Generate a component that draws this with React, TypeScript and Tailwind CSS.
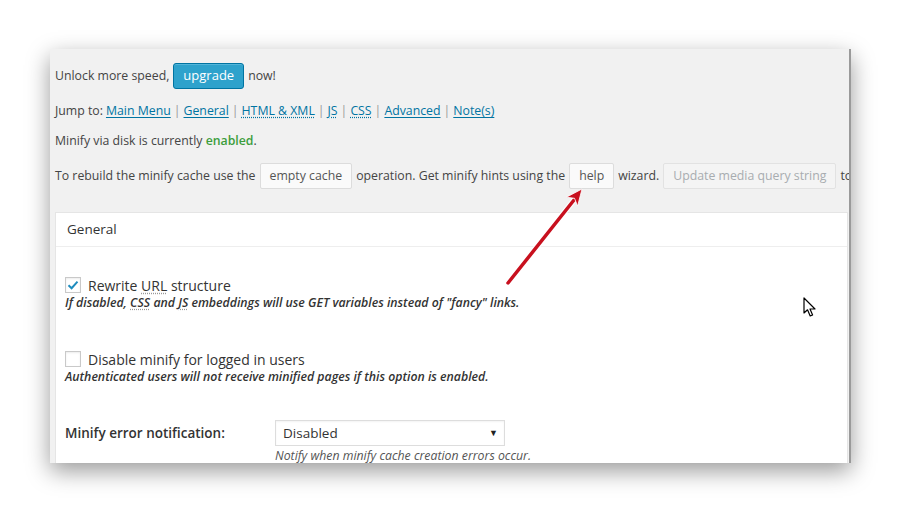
import { useState } from "react";

const font = { fontFamily: '"Open Sans", "Liberation Sans", sans-serif' };

const jumpLinks = [
  { label: "Main Menu" },
  { label: "General" },
  { label: "HTML & XML", abbr: true },
  { label: "JS", abbr: true },
  { label: "CSS", abbr: true },
  { label: "Advanced" },
  { label: "Note(s)" },
];

const WpButton = ({ children, disabled = false }) => (
  <span
    className={
      "inline-flex items-center h-[26px] px-[9px] mx-[4px] border rounded-[2px] text-[12.3px] " +
      (disabled ? "border-[#e2e2e2] bg-[#f4f4f4] text-[#a8acb0]" : "border-[#dcdcdc] bg-[#fafafa] text-[#555]")
    }
  >
    {children}
  </span>
);

const Checkbox = ({ checked }) => (
  <span className="w-[16px] h-[16px] shrink-0 border border-[#c9c9c9] bg-white shadow-[inset_0_1px_2px_rgba(0,0,0,0.08)] flex items-center justify-center">
    {checked && (
      <svg width="12" height="12" viewBox="0 0 12 12">
        <path d="M1.5 6.2 L4.6 9.2 L10.5 2.6" fill="none" stroke="#1e8cbe" strokeWidth="2" />
      </svg>
    )}
  </span>
);

const App = () => {
  const [rewrite, setRewrite] = useState(true);

  return (
    <div className="w-[900px] h-[513px] bg-white relative overflow-hidden text-[#444]" style={font}>
      <div className="ml-[50px] mt-[49px] w-[801px] h-[414px] bg-[#f1f1f1] overflow-hidden border-r-2 border-[#9a9a9a] shadow-[0_8px_22px_rgba(0,0,0,0.4)]">
        {/* upgrade notice */}
        <div className="ml-[5px] mt-[14px] h-[26px] flex items-center text-[12.3px]">
          Unlock more speed,
          <span className="mx-[4px] h-[26px] px-[9px] inline-flex items-center rounded-[3px] bg-[#2ea2cc] border border-[#0074a2] text-white text-[13px] shadow-[inset_0_1px_0_rgba(120,200,230,0.5)]">
            upgrade
          </span>
          now!
        </div>

        {/* jump links */}
        <div className="ml-[5px] mt-[12px] h-[20px] flex items-center text-[12.3px] whitespace-nowrap">
          <span className="mr-[3px]">Jump to:</span>
          {jumpLinks.map(({ label, abbr }, index) => (
            <span key={index} className="flex items-center">
              {index > 0 && <span className="mx-[3px] text-[#999]">|</span>}
              <span
                className={
                  "text-[#0074a2] underline underline-offset-2 " + (abbr ? "decoration-dotted" : "")
                }
              >
                {label}
              </span>
            </span>
          ))}
        </div>

        <div className="ml-[5px] mt-[10px] h-[20px] flex items-center text-[12.3px]">
          Minify via disk is currently&nbsp;<span className="text-[#3c9d3c] font-semibold">enabled</span>.
        </div>

        {/* cache operations */}
        <div className="ml-[5px] mt-[12px] h-[26px] flex items-center text-[12.3px] whitespace-nowrap">
          To rebuild the minify cache use the
          <WpButton>empty cache</WpButton>
          operation. Get minify hints using the
          <WpButton>help</WpButton>
          wizard.
          <WpButton disabled>Update media query string</WpButton>
          to
        </div>

        {/* General postbox */}
        <div className="ml-[5px] mt-[23px] w-[793px] h-[260px] bg-white border border-[#e5e5e5]">
          <div className="h-[34px] px-[11px] flex items-center border-b border-[#eeeeee] text-[13.5px] text-[#333]">
            General
          </div>
          <div className="pl-[9px]">
            <label className="mt-[30px] h-[16px] flex items-center" onClick={() => setRewrite(!rewrite)}>
              <Checkbox checked={rewrite} />
              <span className="ml-[7px] text-[14px] text-[#333]">
                Rewrite <span className="underline decoration-dotted underline-offset-2 decoration-[#999]">URL</span> structure
              </span>
            </label>
            <div className="mt-[1px] leading-[18px] text-[12.3px] italic font-semibold text-[#333]">
              If disabled, <span className="underline decoration-dotted underline-offset-2 decoration-[#999]">CSS</span> and{" "}
              <span className="underline decoration-dotted underline-offset-2 decoration-[#999]">JS</span> embeddings will use GET
              variables instead of "fancy" links.
            </div>

            <label className="mt-[39px] h-[16px] flex items-center">
              <Checkbox checked={false} />
              <span className="ml-[7px] text-[14px] text-[#333]">Disable minify for logged in users</span>
            </label>
            <div className="mt-[1px] leading-[18px] text-[12.3px] italic font-semibold text-[#333]">
              Authenticated users will not receive minified pages if this option is enabled.
            </div>

            <div className="mt-[34px] flex items-center">
              <div className="w-[210px] text-[13.5px] font-semibold text-[#333]">Minify error notification:</div>
              <div className="w-[230px] h-[26px] border border-[#dddddd] bg-white flex items-center justify-between pl-[7px] pr-[6px] text-[13.5px] text-[#333] shadow-[inset_0_1px_2px_rgba(0,0,0,0.05)]">
                <span>Disabled</span>
                <span className="text-[9px] text-[#222]">▼</span>
              </div>
            </div>
            <div className="ml-[210px] mt-[1px] leading-[18px] text-[12.3px] italic text-[#555]">
              Notify when minify cache creation errors occur.
            </div>
          </div>
        </div>
      </div>

      {/* red annotation arrow */}
      <svg className="absolute left-0 top-0 pointer-events-none" width="900" height="513">
        <line x1="508" y1="283" x2="574" y2="200" stroke="#ffffff" strokeWidth="6" strokeLinecap="round" opacity="0.8" />
        <line x1="508" y1="283" x2="574" y2="200" stroke="#c8101e" strokeWidth="3.5" strokeLinecap="round" />
        <polygon points="582,189 577.6,206 574.5,198.3 566.4,197.2" fill="#c8101e" stroke="#ffffff" strokeWidth="0.8" />
      </svg>

      {/* mouse cursor */}
      <svg className="absolute left-[803px] top-[297px] pointer-events-none" width="14" height="21" viewBox="0 0 14 21">
        <path d="M1 1 L1 16 L4.5 12.8 L7.2 19 L9.6 18 L7 12 L12 12 Z" fill="#ffffff" stroke="#000000" strokeWidth="1.2" strokeLinejoin="round" />
      </svg>
    </div>
  );
};

export default App;
